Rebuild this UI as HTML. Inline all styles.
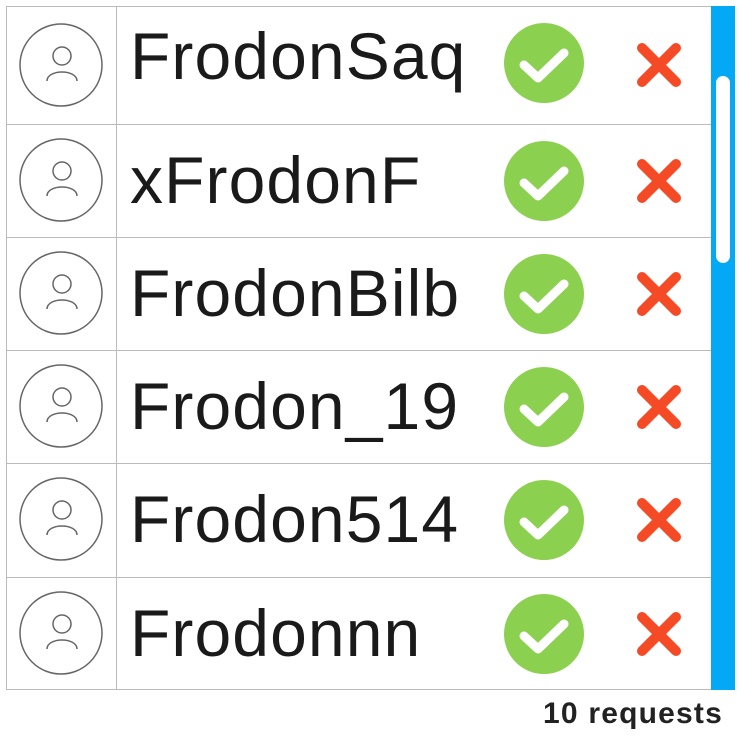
<!DOCTYPE html>
<html><head><style>
body{margin:0;width:742px;height:737px;background:#fff;position:relative;overflow:hidden;font-family:"Liberation Sans","DejaVu Sans",sans-serif}
.t{position:absolute;left:6px;top:6px;width:705px;height:684px;border:1px solid #bbb;border-right:none;box-sizing:border-box}
.hl{position:absolute;left:6px;width:705px;height:1px;background:#bbb}
.vl{position:absolute;left:116px;top:6px;width:1px;height:684px;background:#bbb}
.row{position:absolute;left:0;width:742px;height:113px}
.av{position:absolute;left:19px;width:84px;height:84px}
.nm{position:absolute;left:130px;font-size:66px;color:#1a1a1a;line-height:1;letter-spacing:1.1px}
.ok{position:absolute;left:504px;width:80px;height:80px}
.no{position:absolute;left:636px;width:46px;height:46px}
</style></head><body>
<div class="t"></div>
<div class="vl"></div>
<div class="hl" style="top:124px"></div>
<div class="hl" style="top:237px"></div>
<div class="hl" style="top:350px"></div>
<div class="hl" style="top:463px"></div>
<div class="hl" style="top:577px"></div>
<div style="position:absolute;left:711px;top:6px;width:24px;height:684px;background:#03a9f4"></div>
<div style="position:absolute;left:716px;top:76px;width:14px;height:187px;background:#fff;border-radius:7px"></div>

<svg width="0" height="0" style="position:absolute"><defs>
<symbol id="a" viewBox="0 0 84 84"><circle cx="42" cy="42" r="41" fill="none" stroke="#666" stroke-width="1.5"/><circle cx="43" cy="33" r="9" fill="none" stroke="#666" stroke-width="1.5"/><path d="M28 58 C28 46 58 46 58 58" fill="none" stroke="#666" stroke-width="1.5"/></symbol>
<symbol id="c" viewBox="0 0 80 80"><circle cx="40" cy="40" r="40" fill="#8bd04f"/><path d="M20 42 L34 55 L60 30" fill="none" stroke="#fff" stroke-width="9" stroke-linecap="round" stroke-linejoin="round"/></symbol>
<symbol id="x" viewBox="0 0 46 46"><path d="M6 6 L40 40 M40 6 L6 40" stroke="#f44a25" stroke-width="10" stroke-linecap="round"/></symbol>
</defs></svg>

<div class="row" style="top:9px">
<svg class="av" style="top:14px"><use href="#a"/></svg>
<div class="nm" style="top:14px">FrodonSaq</div>
<svg class="ok" style="top:14px"><use href="#c"/></svg>
<svg class="no" style="top:33px"><use href="#x"/></svg></div>
<div class="row" style="top:124px">
<svg class="av" style="top:14px"><use href="#a"/></svg>
<div class="nm" style="top:23px">xFrodonF</div>
<svg class="ok" style="top:17px"><use href="#c"/></svg>
<svg class="no" style="top:34px"><use href="#x"/></svg></div>
<div class="row" style="top:237px">
<svg class="av" style="top:14px"><use href="#a"/></svg>
<div class="nm" style="top:23px">FrodonBilb</div>
<svg class="ok" style="top:17px"><use href="#c"/></svg>
<svg class="no" style="top:34px"><use href="#x"/></svg></div>
<div class="row" style="top:350px">
<svg class="av" style="top:14px"><use href="#a"/></svg>
<div class="nm" style="top:23px">Frodon_19</div>
<svg class="ok" style="top:17px"><use href="#c"/></svg>
<svg class="no" style="top:34px"><use href="#x"/></svg></div>
<div class="row" style="top:463px">
<svg class="av" style="top:14px"><use href="#a"/></svg>
<div class="nm" style="top:23px">Frodon514</div>
<svg class="ok" style="top:17px"><use href="#c"/></svg>
<svg class="no" style="top:34px"><use href="#x"/></svg></div>
<div class="row" style="top:577px">
<svg class="av" style="top:14px"><use href="#a"/></svg>
<div class="nm" style="top:23px">Frodonnn</div>
<svg class="ok" style="top:17px"><use href="#c"/></svg>
<svg class="no" style="top:34px"><use href="#x"/></svg></div>

<div style="position:absolute;right:19px;top:697px;font-size:30px;font-weight:bold;color:#222;letter-spacing:1.2px">10 requests</div>
</body></html>
